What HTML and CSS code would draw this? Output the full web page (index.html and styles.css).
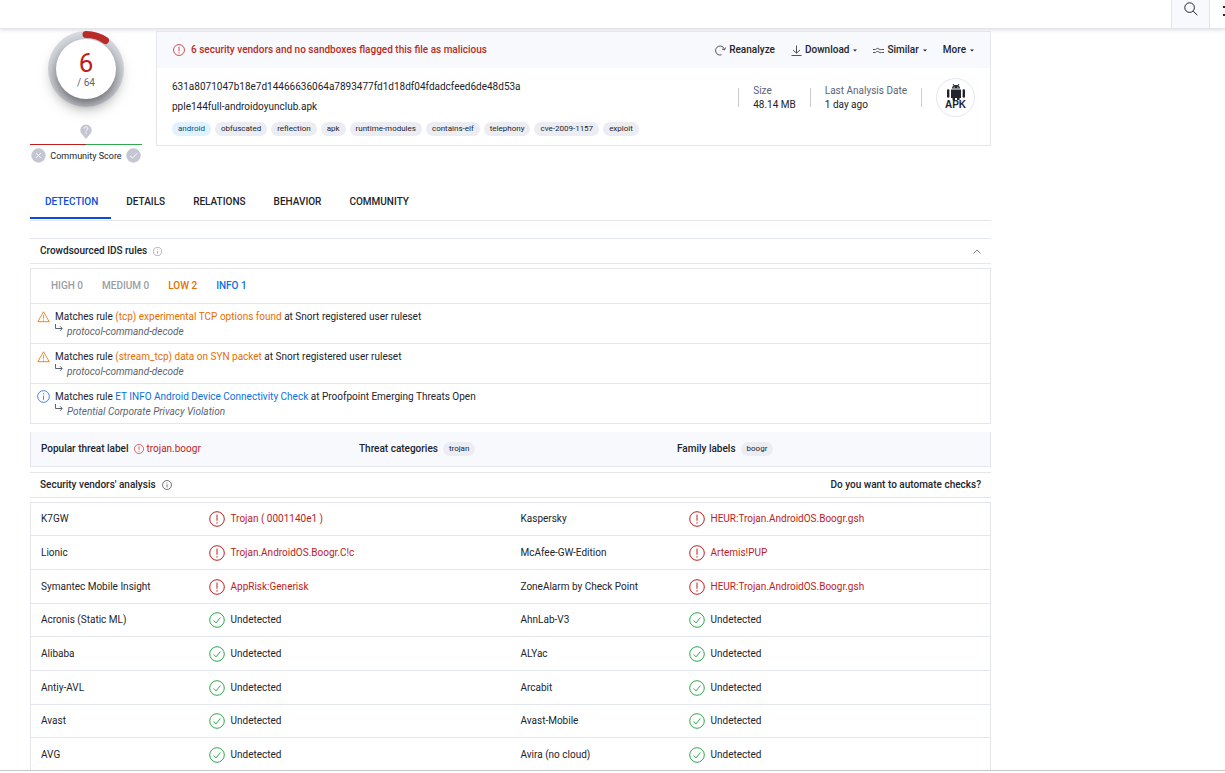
FILE: index.html
```html
<!DOCTYPE html>
<html lang="en">
<head>
  <meta charset="utf-8">
  <title>File report</title>
  <link rel="stylesheet" href="styles.css">
</head>
<body>
  <svg class="sprite" aria-hidden="true">
    <symbol id="alert" viewBox="0 0 16 16">
      <circle cx="8" cy="8" r="7.3"/>
      <path d="M8 3.6v6.2M8 11.2v1.4"/>
    </symbol>
    <symbol id="check" viewBox="0 0 16 16">
      <circle cx="8" cy="8" r="7.3"/>
      <path d="M4.6 8.4l2.4 2.5 4.4-5.4"/>
    </symbol>
    <symbol id="info" viewBox="0 0 16 16">
      <circle cx="8" cy="8" r="7.2"/>
      <path d="M8 7v5M8 4v1.4"/>
    </symbol>
    <symbol id="warning" viewBox="0 0 16 16">
      <path d="M8 2.2L15 14.4H1zM8 6.4v4.2M8 11.8v1.2"/>
    </symbol>
    <symbol id="sub" viewBox="0 0 8 8">
      <path d="M.5 0v4.5H7M5 2.3l2.2 2.2L5 6.7"/>
    </symbol>
    <symbol id="caret" viewBox="0 0 4 3">
      <path d="M0 .5h4L2 2.5z"/>
    </symbol>
  </svg>

  <header class="topbar">
    <button class="topbar-button search" aria-label="Search">
      <svg class="icon" width="14" height="14" viewBox="0 0 14 14"><circle cx="5.6" cy="5.6" r="4.8"/><path d="M9.2 9.2l4.2 4"/></svg>
    </button>
    <button class="topbar-button apps" aria-label="Apps">
      <svg width="10" height="14" viewBox="0 0 10 14"><path d="M0 2h3v2H0zM0 10h3v2H0z"/></svg>
    </button>
  </header>

  <main class="report">
    <section class="summary">
      <div class="score">
        <div class="gauge">
          <svg class="gauge-ring" viewBox="0 0 76 76"><path d="M38 3.5A34.5 34.5 0 0 1 57.5 9.5"/></svg>
          <div class="gauge-face">
            <span class="gauge-value">6</span>
            <span class="gauge-total">/ 64</span>
          </div>
        </div>
        <svg class="pin" width="12" height="15" viewBox="0 0 12 15">
          <path class="pin-body" d="M6 15L1.6 9.8A5.7 5.7 0 1 1 10.4 9.8z"/>
          <path class="pin-mark" d="M4.3 4.6a1.7 1.7 0 1 1 2.6 1.4q-.9.5-.9 1.4M6 8.5v1.2"/>
        </svg>
        <div class="score-line"></div>
        <div class="community">
          <svg class="vote" width="15" height="15" viewBox="0 0 15 15"><circle cx="7.5" cy="7.5" r="7.2"/><path d="M5.2 5.2l4.6 4.6M9.8 5.2L5.2 9.8"/></svg>
          <span>Community Score</span>
          <svg class="vote" width="15" height="15" viewBox="0 0 15 15"><circle cx="7.5" cy="7.5" r="7.2"/><path d="M4 7.8l2.5 2.3L11 5.3"/></svg>
        </div>
      </div>

      <div class="card">
        <div class="card-head">
          <svg class="icon red" width="12" height="12"><use href="#alert"/></svg>
          <span class="flagged">6 security vendors and no sandboxes flagged this file as malicious</span>
          <div class="actions">
            <button class="action"><svg class="icon" width="11" height="11" viewBox="0 0 11 11"><path d="M6.5 9.8A4.5 4.5 0 1 1 9.3 4M10.5 2.5L9.5 5 7 4"/></svg>Reanalyze</button>
            <button class="action"><svg class="icon" width="11" height="11" viewBox="0 0 11 11"><path d="M5.5.5v7.5M2 5l3.5 3.2L9 5M.5 10.5h10"/></svg>Download<svg class="caret" width="4" height="3"><use href="#caret"/></svg></button>
            <button class="action"><svg class="icon" width="11" height="11" viewBox="0 0 11 11"><path d="M0 4.5h2.5l1-.8q1.200-.8 2.400.3T8.500 4.500H11M0 7.500h2.500l1-.8q1.200-.8 2.400.3T8.500 7.500H11"/></svg>Similar<svg class="caret" width="4" height="3"><use href="#caret"/></svg></button>
            <button class="action">More<svg class="caret" width="4" height="3"><use href="#caret"/></svg></button>
          </div>
        </div>
        <div class="card-body">
          <div class="file">
            <div class="file-line">631a8071047b18e7d14466636064a7893477fd1d18df04fdadcfeed6de48d53a</div>
            <div class="file-line">pple144full-androidoyunclub.apk</div>
            <div class="tags">
              <a class="tag tag-blue" href="#">android</a>
              <a class="tag" href="#">obfuscated</a>
              <a class="tag" href="#">reflection</a>
              <a class="tag" href="#">apk</a>
              <a class="tag" href="#">runtime-modules</a>
              <a class="tag" href="#">contains-elf</a>
              <a class="tag" href="#">telephony</a>
              <a class="tag" href="#">cve-2009-1157</a>
              <a class="tag" href="#">exploit</a>
            </div>
          </div>
          <div class="facts">
            <div class="fact"><div class="fact-label">Size</div><div>48.14 MB</div></div>
            <div class="fact"><div class="fact-label">Last Analysis Date</div><div>1 day ago</div></div>
            <div class="fact-end"></div>
            <div class="file-type">
              <svg width="18" height="16" viewBox="0 0 18 16">
                <path d="M5 4.600a4 3.600 0 0 1 8 0zM4 5.500h10v8.500H4zM0 6q0-.8 1.200-.8T2.400 6v7q0 .8-1.200.8T0 13zM15.600 6q0-.8 1.200-.8T18 6v7q0 .8-1.200.8t-1.200-.8zM5.500 14h2.500v2H5.500zM10 14h2.500v2H10z"/>
                <path class="antenna" d="M6 0l1.300 2M12 0l-1.300 2"/>
                <path class="eyes" d="M6.600 2.800h1v1h-1zM10.400 2.800h1v1h-1z"/>
              </svg>
              <span>APK</span>
            </div>
          </div>
        </div>
      </div>
    </section>

    <nav class="tabs">
      <a class="tab active" href="#">DETECTION</a>
      <a class="tab" href="#">DETAILS</a>
      <a class="tab" href="#">RELATIONS</a>
      <a class="tab" href="#">BEHAVIOR</a>
      <a class="tab" href="#">COMMUNITY</a>
    </nav>

    <div class="section-head">
      <h2>Crowdsourced IDS rules</h2>
      <svg class="icon muted" width="9" height="9"><use href="#info"/></svg>
      <button class="collapse" aria-label="Collapse"><svg class="icon" width="8" height="5" viewBox="0 0 8 5"><path d="M.5 4.5L4 1l3.5 3.5"/></svg></button>
    </div>
    <div class="ids">
      <div class="levels">
        <span>HIGH 0</span>
        <span>MEDIUM 0</span>
        <span class="orange">LOW 2</span>
        <span class="blue">INFO 1</span>
      </div>
      <div class="rule">
        <svg class="icon orange" width="13" height="13"><use href="#warning"/></svg>
        <div>
          <div>Matches rule <a class="orange" href="#">(tcp) experimental TCP options found</a> at Snort registered user ruleset</div>
          <div class="rule-sub"><svg class="icon" width="8" height="8"><use href="#sub"/></svg><em>protocol-command-decode</em></div>
        </div>
      </div>
      <div class="rule">
        <svg class="icon orange" width="13" height="13"><use href="#warning"/></svg>
        <div>
          <div>Matches rule <a class="orange" href="#">(stream_tcp) data on SYN packet</a> at Snort registered user ruleset</div>
          <div class="rule-sub"><svg class="icon" width="8" height="8"><use href="#sub"/></svg><em>protocol-command-decode</em></div>
        </div>
      </div>
      <div class="rule">
        <svg class="icon blue" width="13" height="13"><use href="#info"/></svg>
        <div>
          <div>Matches rule <a class="blue" href="#">ET INFO Android Device Connectivity Check</a> at Proofpoint Emerging Threats Open</div>
          <div class="rule-sub"><svg class="icon" width="8" height="8"><use href="#sub"/></svg><em>Potential Corporate Privacy Violation</em></div>
        </div>
      </div>
    </div>

    <div class="threat">
      <div class="threat-item">
        <b>Popular threat label</b>
        <span class="threat-name red"><svg class="icon" width="10" height="10"><use href="#alert"/></svg>trojan.boogr</span>
      </div>
      <div class="threat-item"><b>Threat categories</b><span class="tag">trojan</span></div>
      <div class="threat-item"><b>Family labels</b><span class="tag">boogr</span></div>
    </div>

    <div class="section-head">
      <h2>Security vendors' analysis</h2>
      <svg class="icon" width="10" height="10"><use href="#info"/></svg>
      <a class="automate" href="#">Do you want to automate checks?</a>
    </div>
    <table class="vendors">
      <colgroup><col class="col-name"><col><col class="col-name"><col></colgroup>
      <tbody>
        <tr>
          <td>K7GW</td>
          <td><span class="verdict red"><svg class="icon" width="16" height="16"><use href="#alert"/></svg>Trojan ( 0001140e1 )</span></td>
          <td>Kaspersky</td>
          <td><span class="verdict red"><svg class="icon" width="16" height="16"><use href="#alert"/></svg>HEUR:Trojan.AndroidOS.Boogr.gsh</span></td>
        </tr>
        <tr>
          <td>Lionic</td>
          <td><span class="verdict red"><svg class="icon" width="16" height="16"><use href="#alert"/></svg>Trojan.AndroidOS.Boogr.C!c</span></td>
          <td>McAfee-GW-Edition</td>
          <td><span class="verdict red"><svg class="icon" width="16" height="16"><use href="#alert"/></svg>Artemis!PUP</span></td>
        </tr>
        <tr>
          <td>Symantec Mobile Insight</td>
          <td><span class="verdict red"><svg class="icon" width="16" height="16"><use href="#alert"/></svg>AppRisk:Generisk</span></td>
          <td>ZoneAlarm by Check Point</td>
          <td><span class="verdict red"><svg class="icon" width="16" height="16"><use href="#alert"/></svg>HEUR:Trojan.AndroidOS.Boogr.gsh</span></td>
        </tr>
        <tr>
          <td>Acronis (Static ML)</td>
          <td><span class="verdict"><svg class="icon green" width="16" height="16"><use href="#check"/></svg>Undetected</span></td>
          <td>AhnLab-V3</td>
          <td><span class="verdict"><svg class="icon green" width="16" height="16"><use href="#check"/></svg>Undetected</span></td>
        </tr>
        <tr>
          <td>Alibaba</td>
          <td><span class="verdict"><svg class="icon green" width="16" height="16"><use href="#check"/></svg>Undetected</span></td>
          <td>ALYac</td>
          <td><span class="verdict"><svg class="icon green" width="16" height="16"><use href="#check"/></svg>Undetected</span></td>
        </tr>
        <tr>
          <td>Antiy-AVL</td>
          <td><span class="verdict"><svg class="icon green" width="16" height="16"><use href="#check"/></svg>Undetected</span></td>
          <td>Arcabit</td>
          <td><span class="verdict"><svg class="icon green" width="16" height="16"><use href="#check"/></svg>Undetected</span></td>
        </tr>
        <tr>
          <td>Avast</td>
          <td><span class="verdict"><svg class="icon green" width="16" height="16"><use href="#check"/></svg>Undetected</span></td>
          <td>Avast-Mobile</td>
          <td><span class="verdict"><svg class="icon green" width="16" height="16"><use href="#check"/></svg>Undetected</span></td>
        </tr>
        <tr>
          <td>AVG</td>
          <td><span class="verdict"><svg class="icon green" width="16" height="16"><use href="#check"/></svg>Undetected</span></td>
          <td>Avira (no cloud)</td>
          <td><span class="verdict"><svg class="icon green" width="16" height="16"><use href="#check"/></svg>Undetected</span></td>
        </tr>
      </tbody>
    </table>
  </main>
  <footer class="bottom-line"></footer>
</body>
</html>
```
FILE: styles.css
```css
* {
  box-sizing: border-box;
}

body {
  display: flex;
  flex-direction: column;
  height: 100vh;
  margin: 0;
  overflow: hidden;
  background: #fff;
  color: #21242c;
  font-family: Roboto, sans-serif;
  font-size: 10px;
  line-height: 14px;
}

a {
  color: inherit;
  text-decoration: none;
}

button {
  padding: 0;
  border: 0;
  background: none;
  color: inherit;
  font: inherit;
  cursor: pointer;
}

.sprite {
  display: none;
}

.icon {
  flex: none;
  fill: none;
  stroke: currentColor;
  stroke-width: 1;
}

.red {
  color: #c01c1c;
}

.orange {
  color: #e56e00;
}

.blue {
  color: #0b6fe0;
}

.green {
  color: #2fa84f;
}

.muted {
  color: #7c8087;
}

/* top bar */
.topbar {
  display: flex;
  flex: none;
  justify-content: flex-end;
  height: 29px;
  border-bottom: 1px solid #e3e6ee;
  box-shadow: 0 1px 4px rgba(0, 0, 0, 0.14);
}

.topbar-button {
  display: flex;
  border-left: 1px solid #e3e6ee;
}

.search {
  width: 38px;
  padding: 2px 12px;
  background: #f8f9fc;
}

.apps {
  width: 16px;
  padding: 4px 0 0 13px;
  overflow: hidden;
}

.apps svg {
  flex: none;
  fill: #21242c;
}

/* summary */
.report {
  flex: 1;
  width: 100%;
  max-width: 991px;
  min-height: 0;
  padding: 2px 0 0 30px;
  overflow: hidden;
}

.summary {
  display: flex;
  align-items: flex-start;
  gap: 14px;
}

.score {
  display: flex;
  flex-direction: column;
  align-items: center;
  width: 112px;
}

.gauge {
  display: grid;
  place-items: center;
  width: 76px;
  height: 76px;
  border-radius: 50%;
  background: #dcdee6;
}

.gauge > * {
  grid-area: 1 / 1;
}

.gauge-ring {
  z-index: 1;
  width: 76px;
  height: 76px;
  fill: none;
  stroke: #b92b27;
  stroke-width: 7;
  stroke-linecap: round;
}

.gauge-face {
  display: flex;
  flex-direction: column;
  align-items: center;
  width: 60px;
  height: 60px;
  padding-top: 11px;
  border-radius: 50%;
  background: #fff;
  box-shadow: 0 6px 16px rgba(0, 0, 0, 0.6);
}

.gauge-value {
  color: #c01c1c;
  font-size: 26px;
  line-height: 26px;
}

.gauge-total {
  color: #5a6472;
}

.pin {
  margin-top: 17px;
}

.pin-body {
  fill: #c4c7d3;
}

.pin-mark {
  fill: none;
  stroke: #fff;
}

.score-line {
  width: 100%;
  height: 1px;
  margin: 5px 0 3px;
  background: linear-gradient(to right, #c01c1c 50%, #2fa84f 50%);
}

.community {
  display: flex;
  align-items: center;
  gap: 4px;
  font-size: 9px;
  white-space: nowrap;
}

.vote {
  flex: none;
  fill: #c4c7d3;
  stroke: #fff;
}

.vote circle {
  stroke: none;
}

.card {
  flex: 1;
  border: 1px solid #e3e6ee;
}

.card-head {
  display: flex;
  align-items: center;
  gap: 6px;
  height: 36px;
  padding: 0 16px;
  background: #f8f9fc;
}

.flagged {
  color: #b92b27;
  font-weight: 500;
}

.actions {
  display: flex;
  gap: 16px;
  margin-left: auto;
}

.action {
  display: flex;
  align-items: center;
  gap: 3px;
  font-weight: 500;
}

.action .icon {
  color: #50545c;
}

.caret {
  margin-left: 1px;
  fill: currentColor;
}

.card-body {
  display: flex;
  justify-content: space-between;
  padding: 10px 15px 9px;
}

.file-line {
  height: 20px;
  line-height: 18px;
}

.tags {
  display: flex;
  gap: 4px;
  margin-top: 4px;
}

.tag {
  height: 14px;
  padding: 0 6px;
  border-radius: 7px;
  background: #ecedf3;
  font-size: 8px;
  line-height: 14px;
}

.tag-blue {
  background: #e0f1ff;
  color: #0b4d75;
}

.facts {
  display: flex;
  align-items: flex-start;
}

.fact {
  display: flex;
  flex-direction: column;
  justify-content: center;
  height: 19px;
  margin-top: 10px;
  padding: 0 14px;
  border-left: 1px solid #c9ccd3;
}

.fact-label {
  color: #5a6472;
}

.fact-end {
  height: 19px;
  margin: 10px 14px 0 0;
  border-left: 1px solid #c9ccd3;
}

.file-type {
  display: flex;
  flex-direction: column;
  align-items: center;
  width: 39px;
  height: 39px;
  padding-top: 5px;
  border: 1px solid #e3e6ee;
  border-radius: 50%;
  font: bold 10px/10px "Liberation Sans", sans-serif;
}

.file-type svg {
  flex: none;
  fill: currentColor;
}

.antenna {
  stroke: currentColor;
}

.eyes {
  fill: #fff;
}

/* tabs */
.tabs {
  display: flex;
  margin-top: 20px;
  border-bottom: 1px solid #e3e6ee;
}

.tab {
  height: 36px;
  margin-bottom: 1px;
  padding: 12px 13px 0 15px;
  font-weight: 500;
}

.active {
  border-bottom: 2px solid #0b4dda;
  color: #0b4dda;
}

/* sections */
.section-head {
  display: flex;
  align-items: center;
  gap: 6px;
  height: 26px;
  padding: 0 10px;
  border-top: 1px solid #e3e6ee;
  border-bottom: 1px solid #e3e6ee;
}

.tabs + .section-head {
  margin-top: 17px;
}

h2 {
  margin: 0;
  font-size: 10px;
  font-weight: 500;
}

.collapse {
  display: flex;
  margin-left: auto;
  color: #7c8087;
}

.automate {
  margin-left: auto;
  font-weight: 500;
}

.ids {
  margin-top: 4px;
  border: 1px solid #e3e6ee;
}

.levels {
  display: flex;
  gap: 19px;
  padding: 10px 20px;
  color: #9a9da3;
  font-weight: 500;
}

.rule {
  display: flex;
  gap: 5px;
  height: 40px;
  padding: 5px 6px 0;
  border-top: 1px solid #e3e6ee;
  line-height: 15px;
}

.rule > .icon {
  margin-top: 1px;
}

.rule-sub {
  display: flex;
  gap: 4px;
  color: #5a6472;
}

.threat {
  display: grid;
  grid-template-columns: repeat(3, 1fr);
  gap: 15px;
  margin: 8px 0 5px;
  padding: 10px;
  border: solid #e3e6ee;
  border-width: 0 1px 1px;
  background: #f8f9fc;
}

.threat-item {
  display: flex;
  gap: 5px;
}

.threat-item b {
  font-weight: 500;
}

.threat-name {
  display: flex;
  align-items: center;
  gap: 3px;
}

.vendors {
  width: 100%;
  margin-top: 4px;
  border-collapse: collapse;
  border: 1px solid #e3e6ee;
  table-layout: fixed;
}

.col-name {
  width: 178px;
}

.vendors tr {
  height: 34px;
  border-top: 1px solid #e3e6ee;
}

.vendors tr:nth-child(3n + 1) {
  height: 33px;
}

.vendors td {
  padding: 0;
}

.vendors td:nth-child(odd) {
  padding-left: 10px;
}

.verdict {
  display: flex;
  align-items: center;
  gap: 6px;
}

.bottom-line {
  flex: none;
  height: 3px;
  border-top: 1px solid #c4c6ca;
}
```
